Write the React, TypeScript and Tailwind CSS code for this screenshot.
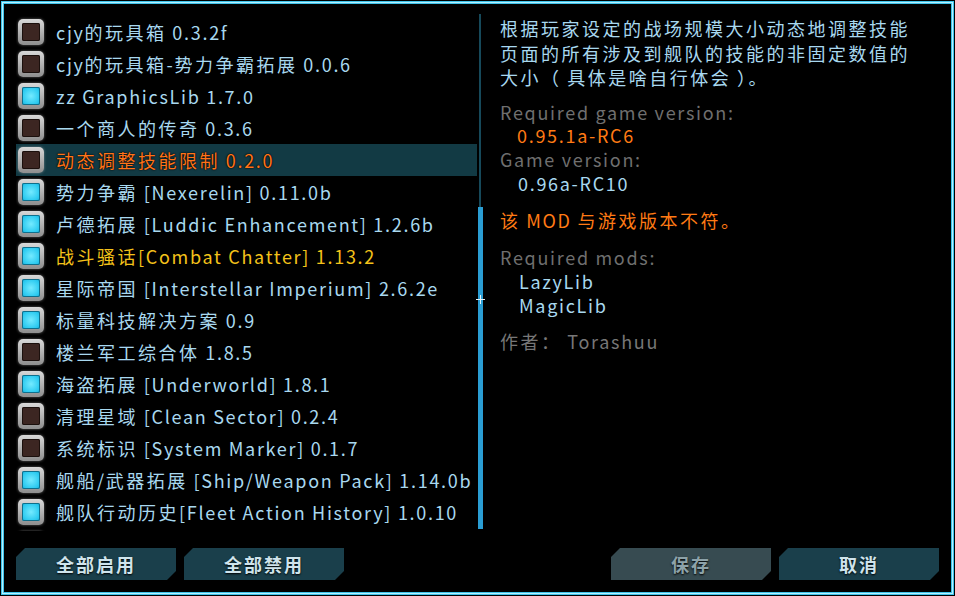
import React from 'react';

type Mod = {
  name: string;
  on: boolean;
  tone?: 'selected' | 'yellow';
};

const mods: Mod[] = [
  { name: 'cjy的玩具箱 0.3.2f', on: false },
  { name: 'cjy的玩具箱-势力争霸拓展 0.0.6', on: false },
  { name: 'zz GraphicsLib 1.7.0', on: true },
  { name: '一个商人的传奇 0.3.6', on: false },
  { name: '动态调整技能限制 0.2.0', on: false, tone: 'selected' },
  { name: '势力争霸 [Nexerelin] 0.11.0b', on: true },
  { name: '卢德拓展 [Luddic Enhancement] 1.2.6b', on: true },
  { name: '战斗骚话[Combat Chatter] 1.13.2', on: true, tone: 'yellow' },
  { name: '星际帝国 [Interstellar Imperium] 2.6.2e', on: true },
  { name: '标量科技解决方案 0.9', on: true },
  { name: '楼兰军工综合体 1.8.5', on: false },
  { name: '海盗拓展 [Underworld] 1.8.1', on: true },
  { name: '清理星域 [Clean Sector] 0.2.4', on: false },
  { name: '系统标识 [System Marker] 0.1.7', on: false },
  { name: '舰船/武器拓展 [Ship/Weapon Pack] 1.14.0b', on: true },
  { name: '舰队行动历史[Fleet Action History] 1.0.10', on: true },
  { name: '', on: true },
];

// the game font spaces CJK glyphs wider than latin ones
function T({ children }: { children: string }) {
  const parts = children.split(/([\u3000-\u9fff\uff00-\uffef]+)/).filter(Boolean);
  return (
    <>
      {parts.map((p, i) =>
        /[\u3000-\u9fff\uff00-\uffef]/.test(p) ? (
          <span key={i} className="tracking-[2.5px]">
            {p}
          </span>
        ) : (
          <span key={i} className="tracking-[1.7px]">
            {p}
          </span>
        )
      )}
    </>
  );
}

function Checkbox({ on }: { on: boolean }) {
  return (
    <div className="ml-[2px] w-[26px] h-[26px] shrink-0 rounded-[5px] p-[4px] bg-[linear-gradient(180deg,#d8d8d8,#8e8e8e)] shadow-[0_0_3px_rgba(220,220,220,0.45)]">
      <div
        className={
          on
            ? 'w-full h-full rounded-[2px] bg-[radial-gradient(circle,#74eaff_0%,#2bcaf0_70%,#1aa6d0_100%)] shadow-[inset_0_0_0_1px_#0e6f8c]'
            : 'w-full h-full rounded-[2px] bg-[#3c2622] shadow-[inset_0_0_0_1px_#1b100d]'
        }
      />
    </div>
  );
}

function ModRow({ mod }: { mod: Mod }) {
  const color =
    mod.tone === 'selected'
      ? 'text-[#ff741a]'
      : mod.tone === 'yellow'
      ? 'text-[#f4c21a]'
      : 'text-[#a8d8ef]';
  return (
    <div
      className={`h-[32px] shrink-0 flex items-center gap-[12px] ${
        mod.tone === 'selected' ? 'bg-[#123a44]' : ''
      }`}
    >
      <Checkbox on={mod.on} />
      <span
        className={`whitespace-nowrap ${color} [text-shadow:0_0_2px_#000,0_0_1px_#000]`}
      >
        <T>{mod.name}</T>
      </span>
    </div>
  );
}

function GameButton({ label, disabled }: { label: string; disabled?: boolean }) {
  return (
    <div
      className={`w-[160px] h-[32px] flex items-center justify-center text-[18px] font-bold tracking-[2px] [text-shadow:0_1px_2px_#000] [clip-path:polygon(9px_0,100%_0,100%_calc(100%_-_9px),calc(100%_-_9px)_100%,0_100%,0_9px)] ${
        disabled ? 'bg-[#374b51] text-[#8da2a9]' : 'bg-[#1a3f4b] text-[#cfe4ec]'
      }`}
    >
      {label}
    </div>
  );
}

export default function App() {
  return (
    <div className="relative w-[955px] h-[596px] bg-black p-px font-['Noto_Sans_CJK_SC',sans-serif] text-[18px]">
      <div className="w-full h-full border border-[#3fc3ea]">
        <div className="w-full h-full border border-[#b6f0ff]">
          <div className="w-full h-full border border-[#3fc3ea] bg-black px-[12px] pt-[12px] pb-[12px] flex flex-col">
            <div className="h-[515px] flex">
              {/* mod list */}
              <div className="w-[461px] h-full overflow-hidden flex flex-col">
                {mods.map((m, i) => (
                  <ModRow key={i} mod={m} />
                ))}
              </div>

              {/* scrollbar */}
              <div className="w-[6px] h-full flex flex-col items-center -mt-[2px]">
                <div className="w-[2px] h-[193px] bg-[#16495a]" />
                <div className="w-[5px] flex-1 bg-[#2a9dd3]" />
              </div>

              {/* details */}
              <div className="ml-[17px] flex-1 leading-[24.5px]">
                <div className="text-[#a8d8ef]">
                  <div><T>根据玩家设定的战场规模大小动态地调整技能</T></div>
                  <div><T>页面的所有涉及到舰队的技能的非固定数值的</T></div>
                  <div><T>大小（ 具体是啥自行体会 ）。</T></div>
                </div>
                <div className="mt-[11px] leading-[23.7px]">
                  <div className="text-[#6f6f6f]"><T>Required game version:</T></div>
                  <div className="pl-[17px] text-[#ff7a14]"><T>0.95.1a-RC6</T></div>
                  <div className="text-[#6f6f6f]"><T>Game version:</T></div>
                  <div className="pl-[18px] text-[#a8d8ef]"><T>0.96a-RC10</T></div>
                </div>
                <div className="mt-[13px] text-[#ff7a14]"><T>该 MOD 与游戏版本不符。</T></div>
                <div className="mt-[12px] leading-[24px]">
                  <div className="text-[#6f6f6f]"><T>Required mods:</T></div>
                  <div className="pl-[19px] text-[#a8d8ef]"><T>LazyLib</T></div>
                  <div className="pl-[19px] text-[#a8d8ef]"><T>MagicLib</T></div>
                </div>
                <div className="mt-[12px] text-[#777777]"><T>作者： Torashuu</T></div>
              </div>
            </div>

            <div className="mt-[17px] flex items-center">
              <div className="flex gap-[8px]">
                <GameButton label="全部启用" />
                <GameButton label="全部禁用" />
              </div>
              <div className="ml-auto flex gap-[8px]">
                <GameButton label="保存" disabled />
                <GameButton label="取消" />
              </div>
            </div>
          </div>
        </div>
      </div>

      {/* mouse cursor */}
      <div className="absolute left-[476px] top-[295px] w-[9px] h-[9px]">
        <div className="absolute left-[4px] top-0 w-px h-[9px] bg-[#e8f4f8]" />
        <div className="absolute top-[4px] left-0 h-px w-[9px] bg-[#e8f4f8]" />
      </div>
    </div>
  );
}
